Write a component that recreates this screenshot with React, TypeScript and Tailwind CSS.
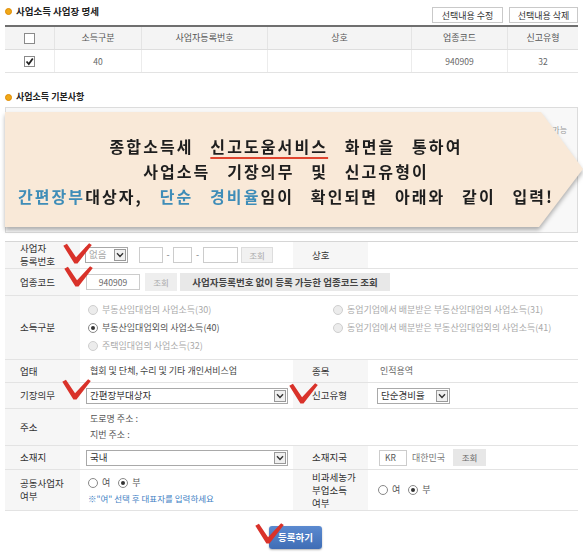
import type { ReactNode } from "react";

// ── 작은 부품들 ─────────────────────────────────────
function Bullet() {
  return <span className="inline-block w-[7px] h-[7px] rounded-full bg-[#f0a818] border border-[#e08a00] mr-[4px]" />;
}

function CheckBox({ checked }: { checked?: boolean }) {
  return (
    <span className="inline-flex w-[11px] h-[11px] border border-[#8a8a8a] bg-white items-center justify-center">
      {checked && (
        <svg width="9" height="9" viewBox="0 0 9 9">
          <path d="M1.5 4.5 L3.8 7 L7.8 1.5" fill="none" stroke="#222" strokeWidth="1.8" />
        </svg>
      )}
    </span>
  );
}

function Radio({ checked, disabled, children }: { checked?: boolean; disabled?: boolean; children: ReactNode }) {
  return (
    <span className={`inline-flex items-center gap-[4px] ${disabled ? "text-[#aaa]" : "text-[#555]"}`}>
      <span
        className={`inline-flex w-[10px] h-[10px] rounded-full border items-center justify-center ${
          disabled ? "border-[#cfcfcf] bg-[#ececec]" : "border-[#888] bg-white"
        }`}
      >
        {checked && <span className="w-[4px] h-[4px] rounded-full bg-[#333]" />}
      </span>
      {children}
    </span>
  );
}

function Select({ value, className, disabled }: { value: string; className: string; disabled?: boolean }) {
  return (
    <div className={`flex items-center h-[16px] border border-[#a9a9a9] bg-white ${className}`}>
      <span className={`flex-1 pl-[3px] text-[9.5px] leading-none ${disabled ? "text-[#aaa]" : "text-[#333]"}`}>
        {value}
      </span>
      <span className="w-[12px] h-[12px] mr-px border border-[#999] bg-[#f0f0f0] flex items-center justify-center">
        <svg width="8" height="6" viewBox="0 0 8 6">
          <path d="M1 1.2 L4 4.4 L7 1.2" fill="none" stroke="#333" strokeWidth="1.4" />
        </svg>
      </span>
    </div>
  );
}

function RedMark({ className }: { className: string }) {
  return (
    <svg className={`absolute ${className}`} width="29" height="21" viewBox="0 0 28 20">
      <path d="M0.3 2.6 L3.8 0.6 L12.6 13.6 L25.2 0 L27.8 1.8 L14 19.6 L11 19.6 Z" fill="#d9322a" />
    </svg>
  );
}

function Label({ children, right }: { children: ReactNode; right?: boolean }) {
  return (
    <div
      className={`w-[75px] shrink-0 self-stretch flex items-center bg-[#f6f6f6] text-[9.5px] leading-[13px] text-[#333] ${
        right ? "pl-[19px]" : "pl-[15px]"
      }`}
    >
      <div>{children}</div>
    </div>
  );
}

function Row({ h, children }: { h: string; children: ReactNode }) {
  return <div className={`flex items-center border-b border-[#e3e3e3] ${h}`}>{children}</div>;
}

// ── App ───────────────────────────────────────────────
export default function App() {
  const cols = ["w-[50px]", "w-[87px]", "w-[126px]", "w-[144px]", "w-[96px]", "w-[70px]"];
  const heads = ["", "소득구분", "사업자등록번호", "상호", "업종코드", "신고유형"];
  const vals = ["", "40", "", "", "940909", "32"];

  return (
    <div className="relative w-[583px] h-[552px] overflow-hidden bg-white px-[5px] font-['Noto_Sans_CJK_KR','Noto_Sans',sans-serif]">
      {/* 사업장 명세 */}
      <div className="flex items-center justify-between h-[25px]">
        <div className="flex items-center pb-[2px] text-[9.5px] font-bold text-[#222]">
          <Bullet />
          사업소득 사업장 명세
        </div>
        <div className="flex gap-[6px] pt-[5px]">
          <button className="w-[71px] h-[16px] border border-[#c9c9c9] bg-white text-[9px] leading-none text-[#333]">
            선택내용 수정
          </button>
          <button className="w-[69px] h-[16px] border border-[#c9c9c9] bg-white text-[9px] leading-none text-[#333]">
            선택내용 삭제
          </button>
        </div>
      </div>

      <div className="border-t-2 border-[#6f6f6f]">
        <div className="flex h-[23px] bg-[#f4f4f4] border-b border-[#dedede]">
          {heads.map((t, i) => (
            <div
              key={i}
              className={`${cols[i]} flex items-center justify-center text-[9px] text-[#555] ${
                i < 5 ? "border-r border-[#e4e4e4]" : ""
              }`}
            >
              {i === 0 ? <CheckBox /> : t}
            </div>
          ))}
        </div>
        <div className="flex h-[23px] border-b border-[#e3e3e3]">
          {vals.map((t, i) => (
            <div
              key={i}
              className={`${cols[i]} flex items-center justify-center text-[8.5px] text-[#666] ${
                i < 5 ? "border-r border-[#ececec]" : ""
              }`}
            >
              {i === 0 ? <CheckBox checked /> : t}
            </div>
          ))}
        </div>
      </div>

      {/* 기본사항 */}
      <div className="flex items-center mt-[17px] h-[14px] text-[9px] font-bold text-[#222]">
        <Bullet />
        사업소득 기본사항
      </div>

      <div className="relative mt-[3px] h-[126px] border border-[#dcdcdc] bg-[#f8f8f8] pt-[4px]">
        <span className="absolute right-[10px] top-[16px] text-[8px] text-[#999]">가능</span>
        <div className="relative -ml-px w-[578px] drop-shadow-[0_3px_2px_rgba(0,0,0,0.3)]">
          <div className="h-[115px] bg-[#f9e9d8] [clip-path:polygon(0_0,536px_0,578px_57px,534px_115px,0_115px)]">
            <div className="w-[562px] pt-[22px] text-center text-[16px] leading-[25px] font-bold tracking-[2.1px] [word-spacing:11px] text-[#1e1e1e]">
              <div>
                종합소득세{" "}
                <span className="underline decoration-[#e0452f] decoration-2 underline-offset-[4px]">신고도움서비스</span>{" "}
                화면을 통하여
              </div>
              <div>사업소득 기장의무 및 신고유형이</div>
              <div className="whitespace-nowrap">
                <span className="text-[#3f8db8]">간편장부</span>대상자,{" "}
                <span className="text-[#3f8db8]">단순 경비율</span>임이 확인되면 아래와 같이 입력!
              </div>
            </div>
          </div>
        </div>
      </div>

      {/* 입력 폼 */}
      <div className="mt-[8px] border-t border-[#d6d6d6]">
        <Row h="h-[27px]">
          <Label>
            사업자
            <br />
            등록번호
          </Label>
          <div className="w-[213px] flex items-center pl-[5px] text-[9px] text-[#777]">
            <Select value="없음" className="w-[43px]" disabled />
            <span className="ml-[11px] w-[24px] h-[16px] border border-[#ccc] bg-white" />
            <span className="w-[10px] text-center">-</span>
            <span className="w-[19px] h-[16px] border border-[#ccc] bg-white" />
            <span className="w-[11px] text-center">-</span>
            <span className="w-[35px] h-[16px] border border-[#ccc] bg-white" />
            <span className="ml-[3px] w-[32px] h-[16px] border border-[#ddd] bg-[#f1f1f1] text-[8.5px] text-[#aaa] flex items-center justify-center">
              조회
            </span>
          </div>
          <Label right>상호</Label>
          <div className="flex-1" />
        </Row>

        <Row h="h-[27px]">
          <Label>업종코드</Label>
          <div className="flex-1 flex items-center pl-[6px]">
            <span className="w-[54px] h-[16px] border border-[#ccc] bg-white text-[8.5px] text-[#666] flex items-center justify-center">
              940909
            </span>
            <span className="ml-[5px] w-[32px] h-[18px] bg-[#eeeeee] text-[8.5px] text-[#aaa] flex items-center justify-center">
              조회
            </span>
            <span className="ml-[3px] w-[210px] h-[18px] bg-[#e8e8e8] text-[9.5px] font-bold text-[#444] flex items-center justify-center">
              사업자등록번호 없이 등록 가능한 업종코드 조회
            </span>
          </div>
        </Row>

        <Row h="h-[64px]">
          <Label>소득구분</Label>
          <div className="flex-1 grid grid-cols-[245px_1fr] gap-y-[1px] pl-[8px] text-[9px] leading-[17px]">
            <Radio disabled>부동산임대업의 사업소득(30)</Radio>
            <Radio disabled>동업기업에서 배분받은 부동산임대업의 사업소득(31)</Radio>
            <Radio checked>부동산임대업외의 사업소득(40)</Radio>
            <Radio disabled>동업기업에서 배분받은 부동산임대업외의 사업소득(41)</Radio>
            <Radio disabled>주택임대업의 사업소득(32)</Radio>
          </div>
        </Row>

        <Row h="h-[23px]">
          <Label>업태</Label>
          <div className="w-[213px] pl-[10px] text-[9px] text-[#444]">협회 및 단체, 수리 및 기타 개인서비스업</div>
          <Label right>종목</Label>
          <div className="flex-1 pl-[12px] text-[9px] text-[#666]">인적용역</div>
        </Row>

        <Row h="h-[26px]">
          <Label>기장의무</Label>
          <div className="w-[213px] pl-[6px]">
            <Select value="간편장부대상자" className="w-[202px]" />
          </div>
          <Label right>신고유형</Label>
          <div className="flex-1 pl-[9px]">
            <Select value="단순경비율" className="w-[73px]" />
          </div>
        </Row>

        <Row h="h-[37px]">
          <Label>주소</Label>
          <div className="flex-1 pl-[10px] text-[9px] leading-[16px] text-[#555]">
            <div>도로명 주소 :</div>
            <div>지번 주소 :</div>
          </div>
        </Row>

        <Row h="h-[24px]">
          <Label>소재지</Label>
          <div className="w-[213px] pl-[6px]">
            <Select value="국내" className="w-[202px]" />
          </div>
          <Label right>소재지국</Label>
          <div className="flex-1 flex items-center pl-[11px] text-[9px] text-[#777]">
            <span className="w-[28px] h-[16px] border border-[#ccc] bg-white pl-[5px] text-[8.5px] text-[#555] flex items-center">
              KR
            </span>
            <span className="ml-[5px]">대한민국</span>
            <span className="ml-[8px] w-[33px] h-[17px] bg-[#e7e7e7] text-[8.5px] text-[#666] flex items-center justify-center">
              조회
            </span>
          </div>
        </Row>

        <Row h="h-[41px]">
          <Label>
            공동사업자
            <br />
            여부
          </Label>
          <div className="w-[213px] pl-[8px] text-[9px]">
            <div className="flex gap-[8px] leading-[16px]">
              <Radio>여</Radio>
              <Radio checked>부</Radio>
            </div>
            <div className="text-[8.5px] leading-[14px] text-[#3f7fc4]">※"여" 선택 후 대표자를 입력하세요</div>
          </div>
          <Label right>
            비과세농가
            <br />
            부업소득
            <br />
            여부
          </Label>
          <div className="flex-1 flex gap-[8px] pl-[10px] text-[9px]">
            <Radio>여</Radio>
            <Radio checked>부</Radio>
          </div>
        </Row>
      </div>

      <div className="flex justify-center pl-[8px] mt-[15px]">
        <button className="w-[53px] h-[23px] rounded-[3px] bg-gradient-to-b from-[#5b8ad0] to-[#3f6db5] text-[9.5px] font-bold text-white shadow-[0_1px_2px_rgba(0,0,0,0.3)]">
          등록하기
        </button>
      </div>

      {/* 빨간 체크 표시 */}
      <RedMark className="left-[63px] top-[243px]" />
      <RedMark className="left-[64px] top-[266px]" />
      <RedMark className="left-[62px] top-[379px]" />
      <RedMark className="left-[289px] top-[383px]" />
      <RedMark className="left-[255px] top-[523px]" />
    </div>
  );
}
